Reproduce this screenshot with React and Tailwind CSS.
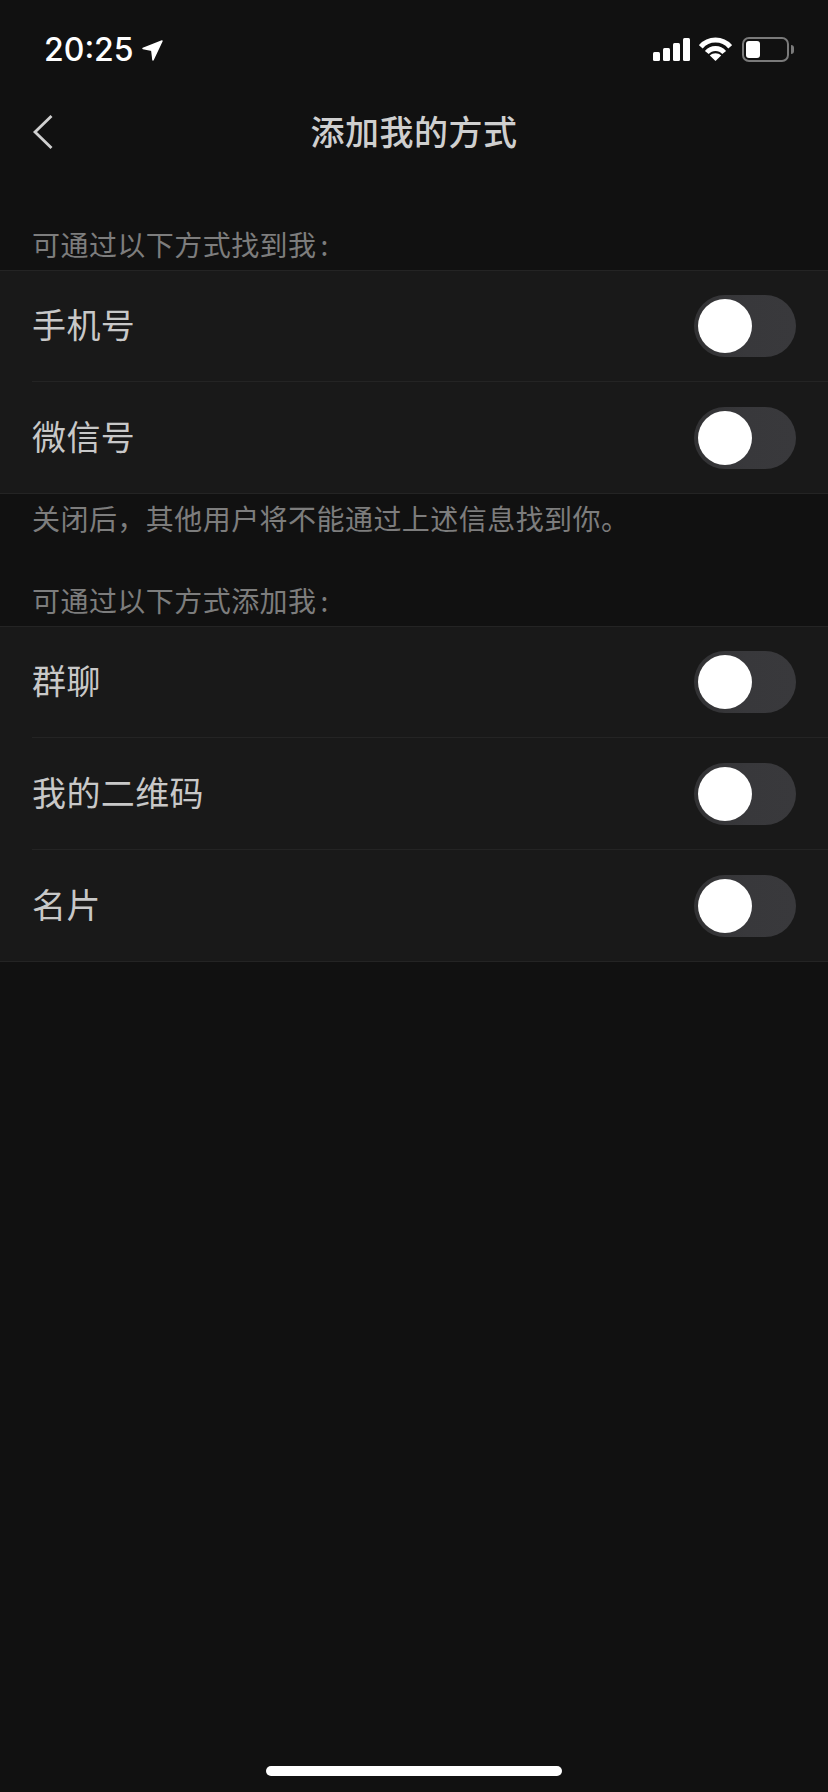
const cjk = 'font-["Noto_Sans_CJK_SC",sans-serif]';

const Toggle = () => (
  <div className="h-[62px] w-[102px] rounded-full bg-gradient-to-r from-[#323234] via-[#38383b] to-[#39393c] p-1">
    <div className="h-[54px] w-[54px] rounded-full bg-white" />
  </div>
);

const Row = ({ label, last, middle }) => (
  <div className="pl-8">
    <div className={`flex items-center justify-between pr-8 ${middle ? 'h-[112px]' : 'h-[111px]'} ${last ? '' : 'border-b border-[#242424]'}`}>
      <span className="pb-[5px] text-[34px] tracking-[0.4px] text-[#c8c8c8]">{label}</span>
      <Toggle />
    </div>
  </div>
);

const Section = ({ rows }) => (
  <div className="border-y border-[#242424] bg-[#191919]">
    {rows.map((r, i) => (
      <Row key={r} label={r} middle={i > 0 && i < rows.length - 1} last={i === rows.length - 1} />
    ))}
  </div>
);

const SectionTitle = ({ text, className }) => (
  <p className={`pb-1 pl-8 text-[28px] leading-[43px] tracking-[0.45px] text-[#7d7d7d] ${className}`}>
    {text}
    <span className="ml-[4px]">:</span>
  </p>
);

const StatusBar = () => (
  <div className="flex h-[98px] items-center justify-between pl-[44px] pr-[34px]">
    <div className="flex items-center gap-[8px] pt-[2px]">
      <span className="font-['Inter',sans-serif] text-[32px] font-medium leading-none text-white">20:25</span>
      <svg width="21" height="21" viewBox="0 0 21 21">
        <path d="M1 8.5 20 1 11 20 9.8 10.2Z" fill="#fff" stroke="#fff" strokeWidth="1.5" strokeLinejoin="round" />
      </svg>
    </div>
    <div className="flex items-center gap-[9px]">
      <svg width="37" height="23" viewBox="0 0 37 23" fill="#fff">
        <rect x="0" y="14" width="7" height="9" rx="1.5" />
        <rect x="10" y="10" width="7" height="13" rx="1.5" />
        <rect x="20" y="5" width="7" height="18" rx="1.5" />
        <rect x="30" y="0" width="7" height="23" rx="1.5" />
      </svg>
      <svg width="33" height="24" viewBox="0 0 33 24" fill="none" stroke="#fff" strokeWidth="5">
        <path d="M1.8 9.8C9.5 0.8 23.5 0.8 31.2 9.8" />
        <path d="M7.8 15.5C12.5 10 20.5 10 25.2 15.5" />
        <path d="M16.5 24 10.8 18.5C14 15.5 19 15.5 22.2 18.5Z" fill="#fff" stroke="none" />
      </svg>
      <div className="ml-px flex items-center gap-[2px]">
        <div className="h-[25px] w-[47px] rounded-[7px] border-2 border-[#7a7a7a] p-[2px]">
          <div className="h-full w-[14px] rounded-[3px] bg-white" />
        </div>
        <div className="h-[9px] w-[3px] rounded-r-full bg-[#7a7a7a]" />
      </div>
    </div>
  </div>
);

export default function App() {
  return (
    <div className={`relative flex h-[1792px] w-[828px] flex-col bg-[#111111] ${cjk}`}>
      <StatusBar />
      <div className="relative flex h-[69px] items-center justify-center">
        <svg className="absolute left-[32px] top-[14px]" width="22" height="38" viewBox="0 0 22 38" fill="none" stroke="#d0d0d0" strokeWidth="2.8">
          <path d="M19.5 4 3 20 19.5 36" />
        </svg>
        <h1 className="pb-1 text-[34px] font-medium tracking-[0.5px] text-[#cfcfcf]">添加我的方式</h1>
      </div>
      <SectionTitle text="可通过以下方式找到我" className="mt-[56px]" />
      <Section rows={['手机号', '微信号']} />
      <p className="mt-[4px] pl-8 text-[28px] leading-[40px] tracking-[0.45px] text-[#7d7d7d]">{'关闭后\uFF0C其他用户将不能通过上述信息找到你。'}</p>
      <SectionTitle text="可通过以下方式添加我" className="mt-[41px]" />
      <Section rows={['群聊', '我的二维码', '名片']} />
      <div className="absolute bottom-[16px] left-[266px] h-[10px] w-[296px] rounded-full bg-white" />
    </div>
  );
}
